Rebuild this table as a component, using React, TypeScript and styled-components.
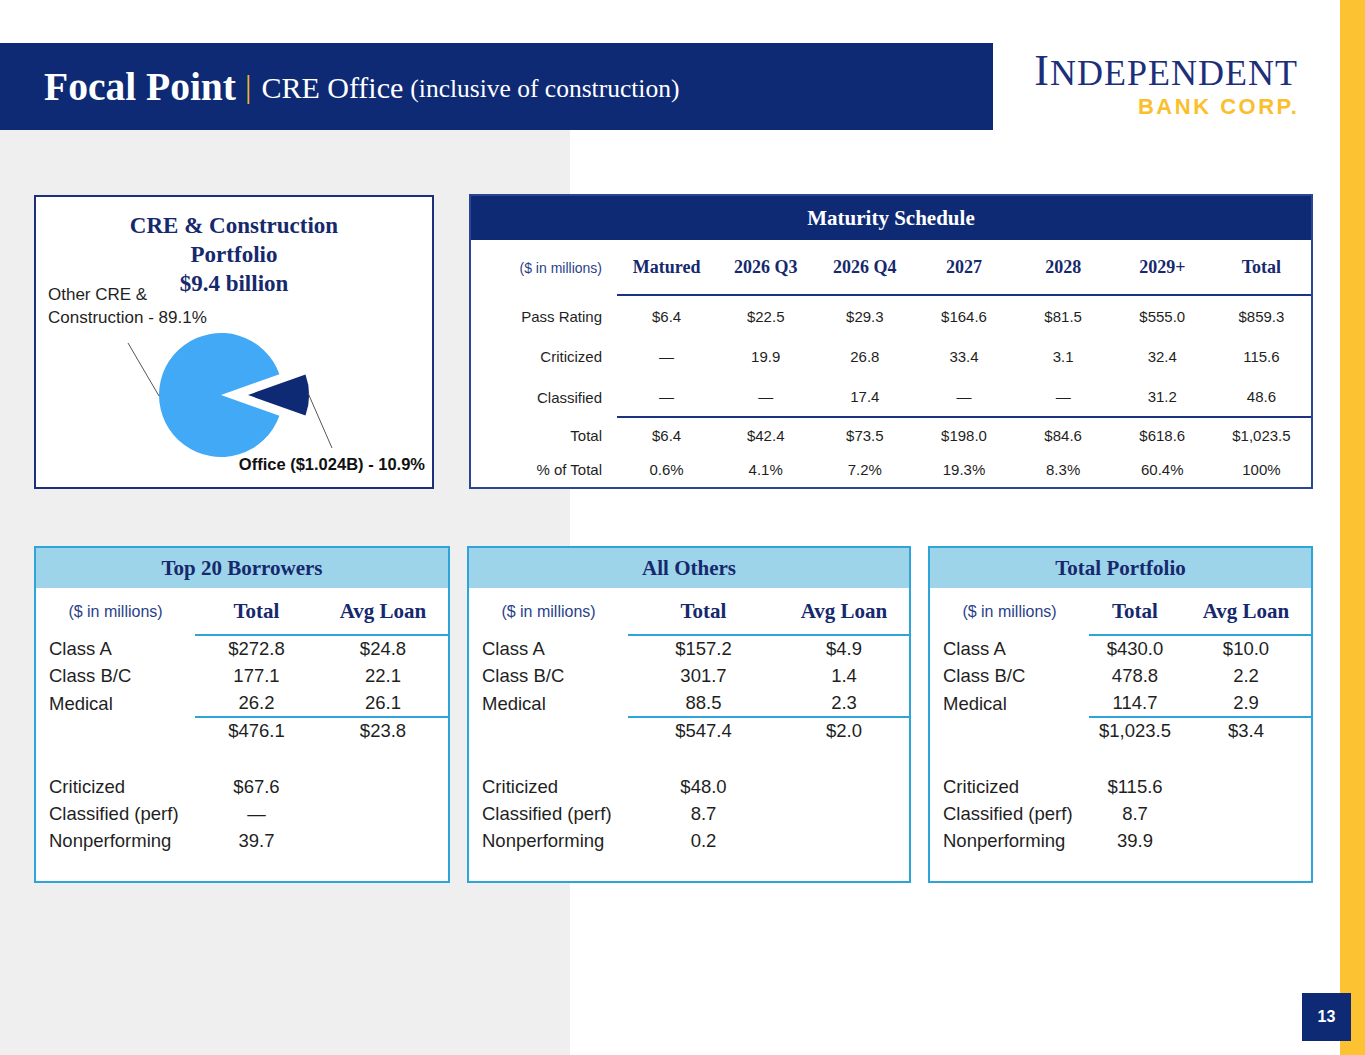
import React from "react";
import styled, { createGlobalStyle } from "styled-components";

const NAVY = "#0f2a75";
const HEAD_TEXT = "#16296d";
const GOLD = "#fdc232";
const SKY = "#2ea4d9";
const SERIF = `"Liberation Serif", "DejaVu Serif", serif`;
const SANS = `"Liberation Sans", Arial, sans-serif`;

const GlobalStyle = createGlobalStyle`
  html, body {
    margin: 0;
    padding: 0;
    background: #fff;
  }
  body {
    font-family: ${SANS};
    color: #1f1f1f;
  }
`;

const maturityCols = ["Matured", "2026 Q3", "2026 Q4", "2027", "2028", "2029+", "Total"];

const maturityRows = [
  { label: "Pass Rating", h: 40, rule: false, values: ["$6.4", "$22.5", "$29.3", "$164.6", "$81.5", "$555.0", "$859.3"] },
  { label: "Criticized", h: 41, rule: false, values: ["—", "19.9", "26.8", "33.4", "3.1", "32.4", "115.6"] },
  { label: "Classified", h: 41, rule: true, values: ["—", "—", "17.4", "—", "—", "31.2", "48.6"] },
  { label: "Total", h: 34, rule: false, values: ["$6.4", "$42.4", "$73.5", "$198.0", "$84.6", "$618.6", "$1,023.5"] },
  { label: "% of Total", h: 35, rule: false, values: ["0.6%", "4.1%", "7.2%", "19.3%", "8.3%", "60.4%", "100%"] },
];

const portfolios = [
  {
    title: "Top 20 Borrowers",
    classes: [
      ["Class A", "$272.8", "$24.8"],
      ["Class B/C", "177.1", "22.1"],
      ["Medical", "26.2", "26.1"],
    ],
    total: ["$476.1", "$23.8"],
    quality: [
      ["Criticized", "$67.6"],
      ["Classified (perf)", "—"],
      ["Nonperforming", "39.7"],
    ],
  },
  {
    title: "All Others",
    classes: [
      ["Class A", "$157.2", "$4.9"],
      ["Class B/C", "301.7", "1.4"],
      ["Medical", "88.5", "2.3"],
    ],
    total: ["$547.4", "$2.0"],
    quality: [
      ["Criticized", "$48.0"],
      ["Classified (perf)", "8.7"],
      ["Nonperforming", "0.2"],
    ],
  },
  {
    title: "Total Portfolio",
    classes: [
      ["Class A", "$430.0", "$10.0"],
      ["Class B/C", "478.8", "2.2"],
      ["Medical", "114.7", "2.9"],
    ],
    total: ["$1,023.5", "$3.4"],
    quality: [
      ["Criticized", "$115.6"],
      ["Classified (perf)", "8.7"],
      ["Nonperforming", "39.9"],
    ],
  },
];

const App = () => {
  return (
    <>
      <GlobalStyle />
      <Slide>
        <Main>
          <Header>
            <TitleBar>
              <TitleMain>Focal Point</TitleMain>
              <TitleSep>|</TitleSep>
              <TitleSub>CRE Office</TitleSub>
              <TitleNote>(inclusive of construction)</TitleNote>
            </TitleBar>
            <Logo>
              <LogoName>
                <LogoCap>I</LogoCap>ndependent
              </LogoName>
              <LogoSub>BANK CORP.</LogoSub>
            </Logo>
          </Header>

          <Content>
            <TopRow>
              <PieBox>
                <PieTitle>
                  CRE &amp; Construction
                  <br />
                  Portfolio
                  <br />
                  $9.4 billion
                </PieTitle>
                <PieCanvas width="396" height="290" viewBox="0 0 396 290">
                  <path d="M185 198 L243.4 177.2 A62 62 0 1 0 243.4 218.8 Z" fill="#42a9f6" />
                  <path d="M212 198 L269.5 177.5 A61 61 0 0 1 269.5 218.5 Z" fill={NAVY} />
                  <line x1="92" y1="146" x2="123" y2="199" stroke="#555" strokeWidth="1" />
                  <line x1="272" y1="196" x2="296" y2="251" stroke="#555" strokeWidth="1" />
                </PieCanvas>
                <OtherLabel>
                  Other CRE &amp;
                  <br />
                  Construction - 89.1%
                </OtherLabel>
                <OfficeLabel>Office ($1.024B) - 10.9%</OfficeLabel>
              </PieBox>

              <MatTable>
                <MatHead>Maturity Schedule</MatHead>
                <MatRow h={56}>
                  <MatLabel>
                    <Units>($ in millions)</Units>
                  </MatLabel>
                  {maturityCols.map((c) => (
                    <MatColHead key={c} rule>
                      {c}
                    </MatColHead>
                  ))}
                </MatRow>
                {maturityRows.map((r) => (
                  <MatRow key={r.label} h={r.h}>
                    <MatLabel>{r.label}</MatLabel>
                    {r.values.map((v, i) => (
                      <MatVal key={i} rule={r.rule}>
                        {v}
                      </MatVal>
                    ))}
                  </MatRow>
                ))}
              </MatTable>
            </TopRow>

            <CardRow>
              {portfolios.map((p) => (
                <Card key={p.title}>
                  <CardHead>{p.title}</CardHead>
                  <Line h={48}>
                    <UnitsCell>($ in millions)</UnitsCell>
                    <ColHead rule>Total</ColHead>
                    <ColHead rule>Avg Loan</ColHead>
                  </Line>
                  {p.classes.map(([label, total, avg], i) => (
                    <Line key={label} h={i === 0 ? 26 : i === 2 ? 29 : 27}>
                      <LineLabel>{label}</LineLabel>
                      <LineVal rule={i === 2}>{total}</LineVal>
                      <LineVal rule={i === 2}>{avg}</LineVal>
                    </Line>
                  ))}
                  <Line h={25}>
                    <LineLabel />
                    <LineVal>{p.total[0]}</LineVal>
                    <LineVal>{p.total[1]}</LineVal>
                  </Line>
                  <Spacer />
                  {p.quality.map(([label, v]) => (
                    <Line key={label} h={27}>
                      <LineLabel>{label}</LineLabel>
                      <LineVal>{v}</LineVal>
                      <LineVal />
                    </Line>
                  ))}
                </Card>
              ))}
            </CardRow>
          </Content>
        </Main>
        <Stripe />
        <PageNum>13</PageNum>
      </Slide>
    </>
  );
};

const Slide = styled.div`
  position: relative;
  width: 1365px;
  height: 1055px;
  display: grid;
  grid-template-columns: 1340px 25px;
  overflow: hidden;
`;

const Stripe = styled.div`
  background: ${GOLD};
`;

const Main = styled.div`
  display: flex;
  flex-direction: column;
`;

const Header = styled.header`
  display: flex;
  margin-top: 43px;
  height: 87px;
`;

const TitleBar = styled.div`
  width: 993px;
  box-sizing: border-box;
  padding-left: 44px;
  background: ${NAVY};
  display: flex;
  align-items: center;
  font-family: ${SERIF};
  color: #fff;
  white-space: nowrap;
`;

const TitleMain = styled.span`
  font-weight: 700;
  font-size: 39.5px;
`;

const TitleSep = styled.span`
  color: #f2b72a;
  font-size: 32px;
  margin: 0 10px 0 9px;
`;

const TitleSub = styled.span`
  font-size: 30px;
  margin-top: 2px;
`;

const TitleNote = styled.span`
  font-size: 25.5px;
  margin: 4px 0 0 7px;
`;

const Logo = styled.div`
  flex: 1;
  display: flex;
  flex-direction: column;
  align-items: flex-end;
  padding: 10px 43px 0 0;
`;

const LogoName = styled.div`
  font-family: ${SERIF};
  color: #1b2f7a;
  font-size: 36px;
  line-height: 36px;
  letter-spacing: 1px;
  text-transform: uppercase;
  margin-right: -1px;
`;

const LogoCap = styled.span`
  font-size: 44px;
`;

const LogoSub = styled.div`
  font-family: ${SANS};
  font-weight: 700;
  font-size: 22px;
  line-height: 26px;
  color: #fbbf2e;
  letter-spacing: 2.5px;
  margin: 3px -2.5px 0 0;
`;

const Content = styled.main`
  flex: 1;
  background: linear-gradient(to right, #efeff0 0, #efeff0 570px, #fff 570px);
  padding: 64px 27px 0 34px;
  display: flex;
  flex-direction: column;
  gap: 57px;
`;

const TopRow = styled.div`
  display: grid;
  grid-template-columns: 400px 844px;
  column-gap: 35px;
  align-items: start;
`;

const PieBox = styled.section`
  position: relative;
  height: 294px;
  margin-top: 1px;
  box-sizing: border-box;
  border: 2px solid #1c2f78;
  background: #fff;
  padding-top: 14px;
`;

const PieTitle = styled.h2`
  margin: 0;
  text-align: center;
  font-family: ${SERIF};
  font-weight: 700;
  font-size: 23px;
  line-height: 29px;
  color: ${HEAD_TEXT};
`;

const PieCanvas = styled.svg`
  position: absolute;
  top: 0;
  left: 0;
`;

const OtherLabel = styled.div`
  position: absolute;
  left: 12px;
  top: 86px;
  font-size: 17px;
  line-height: 23px;
  color: #1f1f1f;
`;

const OfficeLabel = styled.div`
  position: absolute;
  right: 7px;
  top: 257px;
  font-size: 16.5px;
  line-height: 20px;
  font-weight: 700;
  color: #111;
  white-space: nowrap;
`;

const MatTable = styled.section`
  box-sizing: border-box;
  height: 295px;
  border: 2px solid #2b4594;
  background: #fff;
  display: flex;
  flex-direction: column;
`;

const MatHead = styled.div`
  height: 44px;
  flex: none;
  background: ${NAVY};
  color: #fff;
  display: flex;
  align-items: center;
  justify-content: center;
  font-family: ${SERIF};
  font-weight: 700;
  font-size: 21px;
`;

const MatRow = styled.div<{ h: number }>`
  display: grid;
  grid-template-columns: 146px repeat(7, 1fr);
  height: ${(p) => p.h}px;
  flex: none;
`;

const MatLabel = styled.div`
  display: flex;
  align-items: center;
  justify-content: flex-end;
  padding-right: 15px;
  font-size: 15px;
  color: #1f1f1f;
`;

const MatVal = styled.div<{ rule?: boolean }>`
  display: flex;
  align-items: center;
  justify-content: center;
  font-size: 15px;
  color: #1f1f1f;
  border-bottom: ${(p) => (p.rule ? `2px solid #1c3380` : "none")};
`;

const MatColHead = styled(MatVal)`
  font-family: ${SERIF};
  font-weight: 700;
  font-size: 18px;
  color: ${HEAD_TEXT};
`;

const Units = styled.span`
  font-size: 14px;
  color: #2a3f8a;
`;

const CardRow = styled.div`
  display: grid;
  grid-template-columns: 416px 444px 385px;
  column-gap: 17px;
`;

const Card = styled.section`
  box-sizing: border-box;
  height: 337px;
  border: 2px solid ${SKY};
  background: #fff;
  display: flex;
  flex-direction: column;
`;

const CardHead = styled.div`
  height: 40px;
  flex: none;
  background: #9dd4ea;
  display: flex;
  align-items: center;
  justify-content: center;
  font-family: ${SERIF};
  font-weight: 700;
  font-size: 21px;
  color: ${HEAD_TEXT};
`;

const Line = styled.div<{ h: number }>`
  display: grid;
  grid-template-columns: 159px 1fr 130px;
  height: ${(p) => p.h}px;
  flex: none;
`;

const LineLabel = styled.div`
  display: flex;
  align-items: center;
  padding-left: 13px;
  font-size: 18.5px;
  white-space: nowrap;
`;

const UnitsCell = styled.div`
  display: flex;
  align-items: center;
  justify-content: center;
  font-size: 16px;
  color: #2a3f8a;
`;

const LineVal = styled.div<{ rule?: boolean }>`
  display: flex;
  align-items: center;
  justify-content: center;
  font-size: 18.5px;
  border-bottom: ${(p) => (p.rule ? `2px solid ${SKY}` : "none")};
`;

const ColHead = styled(LineVal)`
  font-family: ${SERIF};
  font-weight: 700;
  font-size: 21px;
  color: ${HEAD_TEXT};
`;

const Spacer = styled.div`
  height: 30px;
  flex: none;
`;

const PageNum = styled.div`
  position: absolute;
  right: 14px;
  bottom: 14px;
  width: 49px;
  height: 48px;
  background: ${NAVY};
  color: #fff;
  display: flex;
  align-items: center;
  justify-content: center;
  font-weight: 700;
  font-size: 16px;
`;

export default App;
